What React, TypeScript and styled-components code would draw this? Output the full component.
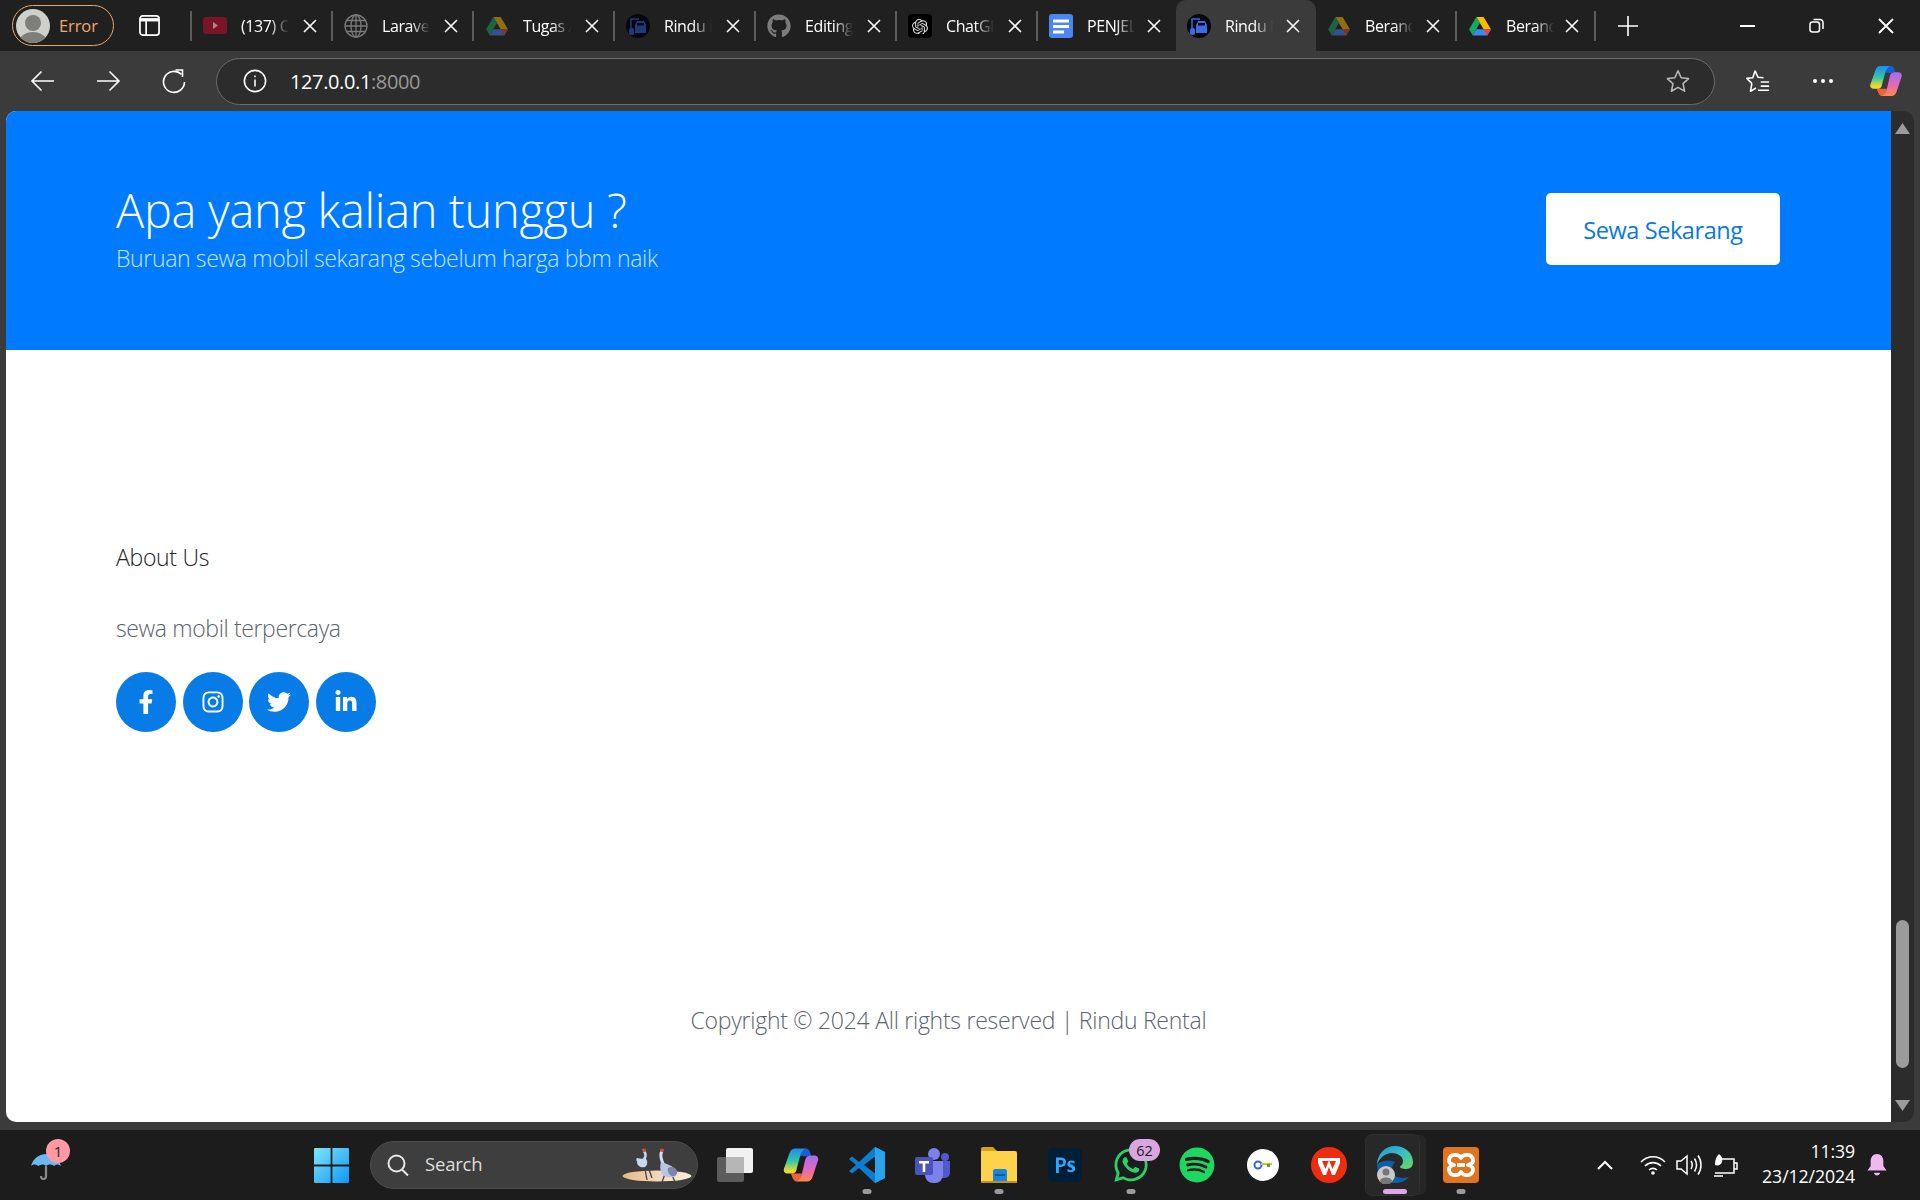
import React from "react";
import styled, { createGlobalStyle } from "styled-components";
import { FaFacebookF, FaInstagram, FaTwitter, FaLinkedinIn, FaGithub, FaSpotify, FaWhatsapp } from "react-icons/fa";
import { SiOpenai } from "react-icons/si";

const Global = createGlobalStyle`
  html, body { margin: 0; padding: 0; background: #1c1c1c; }
  #root { width: 1920px; height: 1200px; overflow: hidden; }
  * { box-sizing: border-box; }
`;

const Shell = styled.div`
  width: 1920px; height: 1200px; display: flex; flex-direction: column;
  font-family: "Open Sans", "Liberation Sans", sans-serif;
`;

/* ---------- tab strip ---------- */
const TabStrip = styled.div`
  height: 51px; background: #202020; display: flex; align-items: center; flex: none;
`;
const ProfileButton = styled.div`
  margin-left: 12px; width: 102px; height: 41px; border: 1.5px solid #eea765; border-radius: 21px;
  display: flex; align-items: center; gap: 9px; padding-left: 3px;
  color: #f0a868; font-size: 16.5px; letter-spacing: -.1px;
`;
const AvatarDisc = styled.div`
  width: 34px; height: 34px; border-radius: 50%; overflow: hidden; flex: none;
`;
const SideIcon = styled.div`
  width: 76px; padding-right: 5px; display: flex; justify-content: center; flex: none; color: #fff;
`;
const Sep = styled.div`
  width: 2px; height: 30px; flex: none; background: #5c5c5c;
`;
const Tab = styled.div<{ $active?: boolean; $w: number; $pr: number }>`
  width: ${p => p.$w}px; height: 51px; flex: none; display: flex; align-items: center;
  padding-left: 11px; padding-right: ${p => p.$pr}px; color: #fff; font-size: 16px; letter-spacing: -.4px;
  background: ${p => (p.$active ? "#3b3b3b" : "transparent")};
  border-radius: ${p => (p.$active ? "10px 10px 0 0" : "0")};
`;
const TabIcon = styled.div`
  width: 24px; height: 24px; flex: none; display: flex; align-items: center; justify-content: center;
`;
const TabTitle = styled.div`
  margin-left: 14px; width: 48px; overflow: hidden; white-space: nowrap; flex: none;
  -webkit-mask-image: linear-gradient(90deg, #000 60%, transparent 100%);
  mask-image: linear-gradient(90deg, #000 60%, transparent 100%);
`;
const TabClose = styled.div`
  margin-left: auto; width: 16px; height: 16px; flex: none; display: flex; color: #fff;
`;
const NewTab = styled.div`
  margin-left: 21px; width: 22px; height: 22px; display: flex; color: #fff; flex: none;
`;
const WindowControls = styled.div`
  margin-left: auto; display: flex; align-items: center; color: #fff;
`;
const WinBtn = styled.div`
  width: 69px; height: 51px; display: flex; align-items: center; justify-content: center;
`;

/* ---------- toolbar ---------- */
const Toolbar = styled.div`
  height: 60px; background: #3b3b3b; display: flex; align-items: center; flex: none; padding-left: 9px; color: #fff;
`;
const NavBtn = styled.div`
  width: 66px; height: 60px; display: flex; align-items: center; justify-content: center; flex: none;
`;
const AddressBar = styled.div`
  margin-left: 9px; width: 1499px; height: 47px; flex: none; border: 1.5px solid #6b6b6b; border-radius: 24px;
  background: #2c2c2c; display: flex; align-items: center; padding: 0 23px 0 26px;
`;
const InfoIcon = styled.div` width: 24px; height: 24px; flex: none; display: flex; `;
const Url = styled.div`
  margin-left: 23px; font-size: 20px; letter-spacing: -.38px; color: #fff; flex: none;
  span { color: #999; }
`;
const StarBtn = styled.div` margin-left: auto; width: 26px; height: 26px; display: flex; color: #b8b8b8; `;
const FavBtn = styled.div` margin-left: 29px; width: 26px; display: flex; `;
const MoreDots = styled.div`
  margin-left: 43px; display: flex; gap: 4px; flex: none;
  i { width: 4px; height: 4px; border-radius: 50%; background: #fff; display: block; }
`;
const CopilotBtn = styled.div` margin-left: 36px; width: 34px; height: 32px; display: flex; `;

/* ---------- viewport ---------- */
const ViewportFrame = styled.div`
  flex: 1; min-height: 0; background: #3b3b3b; padding: 0 6px 8px; display: flex;
`;
const Page = styled.main`
  width: 1885px; background: #fff; border-radius: 10px 0 0 10px; overflow: hidden; display: flex; flex-direction: column;
  font-family: "Open Sans", "Liberation Sans", sans-serif; font-weight: 300;
`;
const Banner = styled.section`
  height: 239px; flex: none; background: #007bff; display: flex; align-items: center; justify-content: space-between;
  padding: 0 111px 3px 110px; color: #fff;
`;
const BannerText = styled.div` display: flex; flex-direction: column; margin-bottom: 2px; `;
const BannerTitle = styled.h1`
  margin: 0; font-size: 47px; line-height: 58px; font-weight: 300; letter-spacing: -.3px;
`;
const BannerSub = styled.p`
  margin: 1px 0 0; font-size: 23px; line-height: 36px; color: #c9e2ff; letter-spacing: -.35px;
`;
const CtaButton = styled.a`
  width: 234px; height: 72px; background: #fff; border-radius: 5px; color: #0a78e8; display: flex; align-items: center;
  justify-content: center; padding-top: 1px; font-size: 23.5px; font-weight: 400; letter-spacing: -.42px;
`;
const FooterBody = styled.section`
  padding: 193px 110px 0; display: flex; flex-direction: column;
`;
const AboutTitle = styled.h4`
  margin: 0; font-size: 23px; line-height: 29px; font-weight: 300; color: #212529; letter-spacing: -.3px;
`;
const AboutText = styled.p`
  margin: 38px 0 0; font-size: 23px; line-height: 36px; color: #5a6470; letter-spacing: -.37px;
`;
const SocialRow = styled.div` margin-top: 26px; display: flex; gap: 6.67px; `;
const SocialLink = styled.a`
  width: 60px; height: 60px; border-radius: 50%; background: #077be6; color: #fff; display: flex; align-items: center;
  justify-content: center; font-size: 24px;
`;
const Copyright = styled.p`
  margin: 270px 0 0; text-align: center; font-size: 23px; line-height: 36px; color: #5a6470; letter-spacing: -.26px;
`;

const ScrollTrack = styled.div`
  width: 23px; background: #2c2c2c; border-radius: 0 10px 10px 0; display: flex; flex-direction: column; align-items: center;
  padding: 12px 0 11px;
`;
const ScrollThumb = styled.div`
  margin-top: auto; margin-bottom: 32px; width: 13px; height: 148px; border-radius: 7px; background: #9b9b9b;
`;
const ScrollArrow = styled.svg` width: 15px; height: 11px; flex: none; `;

/* ---------- taskbar ---------- */
const Taskbar = styled.footer`
  height: 70px; flex: none; background: #1c1c1c; display: flex; align-items: center; color: #fff;
`;
const Weather = styled.div`
  width: 314px; flex: none; height: 70px; display: flex; align-items: center; padding: 4px 0 0 31px; position: relative;
`;
const WeatherBadge = styled.div`
  position: absolute; left: 46px; top: 9px; width: 24px; height: 24px; border-radius: 50%; background: #ff9aa5; color: #222;
  display: flex; align-items: center; justify-content: center; font-size: 15px;
`;
const StartIcon = styled.div` width: 35px; height: 35px; flex: none; display: flex; `;
const SearchBox = styled.div`
  margin-left: 21px; width: 328px; height: 48px; flex: none; border-radius: 24px; background: #3e3e3e; border: 1.5px solid #4c4c4c;
  display: flex; align-items: center; padding: 0 5px 0 16px; color: #ddd; font-size: 18.5px; letter-spacing: -.2px;
`;
const SearchLabel = styled.span` position: relative; top: -2px; `;
const SearchGlyph = styled.div` width: 22px; height: 22px; display: flex; margin-right: 16px; flex: none; `;
const Birds = styled.div` margin-left: auto; width: 70px; height: 42px; display: flex; flex: none; `;
const Apps = styled.div` margin-left: 4px; display: flex; flex: none; `;
const AppSlot = styled.div<{ $active?: boolean }>`
  width: 66px; height: 70px; display: flex; align-items: center; justify-content: center; position: relative;
  &::before {
    content: ${p => (p.$active ? '""' : "none")}; position: absolute; left: 3px; top: 4px; width: 53px; height: 60px;
    border-radius: 7px; background: #282828; border: 1.5px solid #303030; box-shadow: 7px 0 0 -1px #262626;
  }
  & > svg { position: relative; }
`;
const AppDot = styled.div<{ $active?: boolean }>`
  position: absolute; bottom: 6px; left: 50%; transform: translateX(-50%); height: 5px; border-radius: 3px;
  width: ${p => (p.$active ? 24 : 9)}px; background: ${p => (p.$active ? "#e0a6e6" : "#9a9a9a")};
`;
const CountBadge = styled.div`
  position: absolute; left: 31px; top: 9px; width: 31px; height: 22px; border-radius: 11px; background: #d9a6e0; color: #1c1c1c;
  display: flex; align-items: center; justify-content: center; font-size: 14.5px;
`;
const Tray = styled.div`
  flex: 1; display: flex; align-items: center; padding-right: 33px; padding-left: 101px;
`;
const TrayIcon = styled.div<{ $gap?: number }>`
  width: 26px; height: 26px; display: flex; flex: none; margin-left: ${p => p.$gap ?? 10}px;
`;
const Clock = styled.div`
  margin-left: auto; margin-top: -3px; text-align: right; font-size: 17.7px; line-height: 24.5px; letter-spacing: -.1px; color: #fff; flex: none;
`;
const BellIcon = styled.div` margin-left: 12px; width: 20px; height: 24px; display: flex; flex: none; `;

/* ---------- icons ---------- */
const X = () => (
  <svg width="16" height="16" viewBox="0 0 16 16"><path d="M2 2l12 12M14 2L2 14" stroke="currentColor" strokeWidth="1.6" /></svg>
);
const Drive = ({ dim }: { dim?: boolean }) => (
  <svg width="22" height="20" viewBox="0 0 24 22" opacity={dim ? 0.5 : 1}>
    <path d="M8 1h8l8 13.500h-8z" fill="#ffba00" />
    <path d="M8 1L0 14.500l4 7 8-14z" fill="#16a765" />
    <path d="M4 21.500h16l4-7H8z" fill="#4285f4" />
    <path d="M20 21.500l4-7h-8z" fill="#ea4335" />
  </svg>
);
const CarLogo = ({ dim }: { dim?: boolean }) => (
  <svg width="24" height="24" viewBox="0 0 24 24">
    <circle cx="12" cy="12" r="12" fill="#05070f" />
    <g opacity={dim ? 0.5 : 1}>
      <rect x="3" y="14" width="5" height="7" rx="2" fill="#3a6be0" />
      <path d="M5 15V5h8" stroke="#3a6be0" strokeWidth="1.500" fill="none" />
      <path d="M9 11l2-4h7l2 4v8H9z" fill="#3a6be0" />
      <rect x="11" y="9" width="7" height="2.500" fill="#05070f" />
    </g>
  </svg>
);
const Avatar = () => (
  <svg width="34" height="34" viewBox="0 0 34 34">
    <rect width="34" height="34" fill="#cfcfcb" />
    <circle cx="17" cy="14" r="8" fill="#7e7e7a" />
    <ellipse cx="17" cy="33" rx="14" ry="10" fill="#7e7e7a" />
  </svg>
);

function TabIconBlack() {
  return (
    <svg width="24" height="24" viewBox="0 0 24 24">
      <rect width="24" height="24" rx="4" fill="#000" />
      <foreignObject x="4" y="4" width="16" height="16"><SiOpenai size={16} color="#ddd" /></foreignObject>
    </svg>
  );
}

const tabs: { title: string; icon: React.ReactNode; w: number; pr: number; sep: boolean }[] = [
  { title: "(137) Coding", w: 139, pr: 13, sep: true, icon: <svg width="24" height="17" viewBox="0 0 24 17"><rect width="24" height="17" rx="3" fill="#7a1428" /><path d="M10 5l5 3.500-5 3.500z" fill="#b9808c" /></svg> },
  { title: "Laravel", w: 139, pr: 13, sep: true, icon: <svg width="24" height="24" viewBox="0 0 24 24" fill="none" stroke="#7a7a7a" strokeWidth="1.300"><circle cx="12" cy="12" r="11" /><ellipse cx="12" cy="12" rx="5" ry="11" /><path d="M12 1v22M1 12h22M2.500 6.500h19M2.500 17.500h19" /></svg> },
  { title: "Tugas Akhir", w: 139, pr: 13, sep: true, icon: <Drive dim /> },
  { title: "Rindu Rental", w: 139, pr: 13, sep: true, icon: <CarLogo dim /> },
  { title: "Editing", w: 139, pr: 13, sep: true, icon: <FaGithub size={24} color="#7c7c7c" /> },
  { title: "ChatGPT", w: 139, pr: 13, sep: true, icon: <TabIconBlack /> },
  { title: "PENJELASAN", w: 138, pr: 14, sep: true, icon: <svg width="24" height="24" viewBox="0 0 24 24"><rect width="24" height="24" rx="3" fill="#4a87f0" /><path d="M4 5.500h16v3H4zM4 11h16v3H4zM4 16.500h11v3H4z" fill="#fff" /></svg> },
  { title: "Rindu Rental", w: 140, pr: 15, sep: false, icon: <CarLogo /> },
  { title: "Beranda", w: 139, pr: 14, sep: false, icon: <Drive dim /> },
  { title: "Beranda", w: 137, pr: 14, sep: true, icon: <Drive /> },
];

const CopilotLogo = ({ w = 36, h = 36, id }: { w?: number; h?: number; id: string }) => (
  <svg width={w} height={h} viewBox="0 0 36 35">
    <defs>
      <linearGradient id={`${id}a`} x1="0" y1="0" x2="0" y2="1"><stop offset="0" stopColor="#1f8af0" /><stop offset=".5" stopColor="#2fc9a8" /><stop offset=".9" stopColor="#f4d72c" /></linearGradient>
      <linearGradient id={`${id}b`} x1="0" y1="0" x2="0" y2="1"><stop offset="0" stopColor="#a070f0" /><stop offset=".55" stopColor="#e868b8" /><stop offset="1" stopColor="#fb8a4c" /></linearGradient>
    </defs>
    <path d="M23 1c3 0 4 3 5 7l-6 1c-2-1-4-1-5 0 1-4 3-8 6-8z" fill="#1560d8" />
    <path d="M10 26h9c-1 4-3 8-6 8-3-1-4-5-5-8z" fill="#f2603a" />
    <path d="M12 1h11c-3 1-5 4-6 8l-3 11c-1 6-3 6-6 6H5c-3 0-5-2-4-5L6 7c1-4 3-6 6-6z" fill={`url(#${id}a)`} />
    <path d="M24 34H13c3-1 5-4 6-8l3-13c1-4 3-5 6-5h3c3 0 5 2 4 5l-5 15c-1 4-3 6-6 6z" fill={`url(#${id}b)`} />
  </svg>
);

const WinLogo = () => (
  <svg width="35" height="35" viewBox="0 0 35 35">
    <defs><linearGradient id="win" x1="0" y1="0" x2="1" y2="1"><stop offset="0" stopColor="#7ee6fb" /><stop offset="1" stopColor="#0f96f5" /></linearGradient></defs>
    <path d="M0 1a1 1 0 011-1h15.600v16.600H0zM18.400 0H34a1 1 0 011 1v15.600H18.400zM0 18.400h16.600V35H1a1 1 0 01-1-1zM18.400 18.400H35V34a1 1 0 01-1 1H18.400z" fill="url(#win)" />
  </svg>
);

const BirdsArt = () => (
  <svg width="70" height="42" viewBox="0 0 70 42">
    <defs>
      <linearGradient id="sand" x1="0" y1="0" x2="1" y2="0"><stop offset="0" stopColor="#e8b888" /><stop offset=".6" stopColor="#f4dcc0" /><stop offset="1" stopColor="#f6ecdc" /></linearGradient>
    </defs>
    <ellipse cx="35" cy="32" rx="34.500" ry="5.500" fill="url(#sand)" />
    <path d="M22 20l3 16M25 20l5 14M43 30l-3 8M50 31l3 7" stroke="#3c4252" strokeWidth="1.300" fill="none" />
    <path d="M22 7c2 3 2 6 0 8" stroke="#cdd8ee" strokeWidth="2.500" fill="none" />
    <path d="M15 14c3 1 6 1 8 0 3 2 3 7 0 9-4 1-8-1-8-5 1 0-2-2 0-4z" fill="#c8d8f2" />
    <path d="M40 7c-3 5 0 9 1 13" stroke="#d4def0" strokeWidth="3" fill="none" />
    <path d="M39 18c4 1 10 3 14 7 3 3 2 7-1 8-5 1-11 0-13-5-1-3-1-7 0-10z" fill="#b8c6e4" />
    <path d="M46 24c3-2 8-1 9 3 1 3-2 6-5 5-3-1-5-5-4-8z" fill="#7c86a8" />
    <circle cx="22" cy="6" r="2" fill="#c8503c" />
    <circle cx="40" cy="6" r="2" fill="#c8503c" />
    <path d="M22 5l2-5M40 5l-1-5M41 5l2-4" stroke="#4a3a3a" strokeWidth="1.200" />
  </svg>
);

function PsIcon() {
  return (
    <svg width="34" height="34" viewBox="0 0 34 34">
      <rect width="34" height="34" rx="5" fill="#001e36" />
      <path d="M8 25V9.500h5c3 0 5 1.700 5 4.600s-2 4.800-5 4.800h-2.200V25zm2.800-8.500H13c1.400 0 2.300-.9 2.300-2.300S14.400 12 13 12h-2.200z" fill="#31a8ff" />
      <path d="M26.500 15.500c-1-.6-2-.9-3-.9-.9 0-1.300.3-1.300.8 0 1.500 5 1.200 5 5 0 2.500-2 3.800-4.300 3.800-1.300 0-2.500-.3-3.400-.8v-2.400c1 .7 2.100 1 3.200 1 1 0 1.600-.4 1.600-1 0-1.600-5-1.200-5-4.900 0-2.300 1.900-3.700 4.200-3.700 1.100 0 2.100.2 3 .6z" fill="#31a8ff" />
    </svg>
  );
}

function EdgeIcon() {
  return (
    <svg width="36" height="38" viewBox="0 0 36 38">
      <defs>
        <linearGradient id="eg" x1="0" y1="0" x2="1" y2="1"><stop offset="0" stopColor="#1f8fe0" /><stop offset=".5" stopColor="#35c1c1" /><stop offset="1" stopColor="#6ed85c" /></linearGradient>
      </defs>
      <path d="M18 0c10 0 18 7 18 16 0 4-2 7-7 7-3 0-6-1-6-2 0-1 3-2 3-6 0-5-6-8-11-8C8 7 2 12 0 19 0 8 8 0 18 0z" fill="url(#eg)" />
      <path d="M0 19c0 10 8 18 18 18 6 0 10-2 14-6-3 1-11 2-15-2-3-3-3-8 1-13-7-3-17 0-18 3z" fill="#0f5fa8" />
      <circle cx="9" cy="29" r="9" fill="#c9c9c9" />
      <circle cx="9" cy="26" r="3.500" fill="#777" />
      <ellipse cx="9" cy="35" rx="6" ry="3.500" fill="#777" />
    </svg>
  );
}

const appIcons: { key: string; node: React.ReactNode; dot?: boolean; active?: boolean; badge?: string }[] = [
  { key: "task", node: <svg width="36" height="36" viewBox="0 0 36 36"><rect x="0" y="10" width="27" height="25" rx="2" fill="#5c5c5c" /><rect x="9" y="1" width="27" height="25" rx="2" fill="#f1f1f1" /><rect x="9" y="10" width="18" height="16" fill="#b6b6b6" /></svg> },
  { key: "copilot", node: <CopilotLogo id="tb" /> },
  { key: "code", dot: true, node: <svg width="36" height="36" viewBox="0 0 36 36"><path d="M26 0l10 5v26l-10 5-16-15-7 5.500L0 24l7-6-7-6 3-2.500 7 5.500z" fill="#0a7fd0" /><path d="M26 0l10 5v26l-10 5z" fill="#2aa3ef" /><path d="M26 9.500L15 18l11 8.500z" fill="#1c1c1c" /></svg> },
  { key: "teams", node: <svg width="36" height="36" viewBox="0 0 36 36"><circle cx="19" cy="7" r="6" fill="#7b83eb" /><circle cx="30" cy="10" r="4" fill="#5059c9" /><path d="M24 14h11v12a5 5 0 01-5 5h-6z" fill="#5059c9" /><path d="M10 14h18v14a8 8 0 01-8 8h-2a8 8 0 01-8-8z" fill="#7b83eb" /><rect x="0" y="10" width="18" height="18" rx="2" fill="#4b53bc" /><path d="M4 14h10v2.500h-3.700V25H7.700v-8.500H4z" fill="#fff" /></svg> },
  { key: "files", dot: true, node: <svg width="36" height="36" viewBox="0 0 36 36"><path d="M0 2a2 2 0 012-2h10l4 4H0z" fill="#d8a012" /><path d="M0 4h34a2 2 0 012 2v28H0z" fill="#ffd24c" /><path d="M12 24a2 2 0 012-2h10a2 2 0 012 2v10H12z" fill="#1a86d8" /><rect x="14" y="27" width="10" height="2" fill="#0b5ea8" /><rect y="34" width="36" height="2" fill="#c98f10" /></svg> },
  { key: "ps", node: <PsIcon /> },
  { key: "wa", dot: true, badge: "62", node: <FaWhatsapp size={38} color="#25d366" /> },
  { key: "spotify", node: <FaSpotify size={36} color="#1ed760" /> },
  { key: "key", node: <svg width="32" height="32" viewBox="0 0 32 32"><circle cx="16" cy="16" r="16" fill="#fff" /><circle cx="11" cy="16" r="3.500" fill="none" stroke="#2a6be4" strokeWidth="2" /><path d="M14 14h11v2h-3v2h-2v-2h-6z" fill="#f2b90f" /><rect x="20" y="15" width="3" height="3" fill="#2fa84f" /></svg> },
  { key: "wps", node: <svg width="36" height="36" viewBox="0 0 36 36"><circle cx="18" cy="18" r="18" fill="#ee2c10" /><path d="M7 11h22v5l-5 12h-3l-3-8-3 8h-3L7 16z" fill="#fff" /><path d="M11 14l3.500 8 3.500-9 3.500 9 3.500-8z" fill="#ee2c10" /></svg> },
  { key: "edge", dot: true, active: true, node: <EdgeIcon /> },
  { key: "xampp", dot: true, node: <svg width="36" height="36" viewBox="0 0 36 36"><rect width="36" height="36" rx="4" fill="#e0741f" /><path d="M18 11c-2-4-11-5-12 2-.5 3 3 4.500 5 5-2 .5-5.500 2-5 5 1 7 10 6 12 2 2 4 11 5 12-2 .5-3-3-4.500-5-5 2-.5 5.500-2 5-5-1-7-10-6-12-2z" fill="none" stroke="#fff" strokeWidth="3.800" strokeLinejoin="round" /><path d="M14 18h8" stroke="#fff" strokeWidth="3.800" /></svg> },
];

export default function App() {
  return (
    <Shell>
      <Global />
      <TabStrip>
        <ProfileButton>
          <AvatarDisc><Avatar /></AvatarDisc>
          Error
        </ProfileButton>
        <SideIcon>
          <svg width="21" height="21" viewBox="0 0 22 22" fill="none" stroke="currentColor" strokeWidth="1.800">
            <rect x="1" y="1" width="20" height="20" rx="3" />
            <path d="M1 5h20" strokeWidth="3.500" />
            <path d="M7.500 5v16" />
          </svg>
        </SideIcon>
        {tabs.map((t, i) => (
          <React.Fragment key={i}>
            {t.sep && <Sep />}
            <Tab $active={i === 7} $w={t.w} $pr={t.pr}>
              <TabIcon>{t.icon}</TabIcon>
              <TabTitle>{t.title}</TabTitle>
              <TabClose><X /></TabClose>
            </Tab>
          </React.Fragment>
        ))}
        <Sep />
        <NewTab>
          <svg width="22" height="22" viewBox="0 0 22 22"><path d="M11 1v20M1 11h20" stroke="currentColor" strokeWidth="1.600" /></svg>
        </NewTab>
        <WindowControls>
          <WinBtn><svg width="15" height="4" viewBox="0 0 15 4"><rect y="1" width="15" height="2" fill="currentColor" /></svg></WinBtn>
          <WinBtn><svg width="15" height="15" viewBox="0 0 15 15" fill="none" stroke="currentColor" strokeWidth="1.500"><rect x="1" y="4" width="9.500" height="10" rx="2.500" /><path d="M4.500 1.500H11a3 3 0 013 3V11" /></svg></WinBtn>
          <WinBtn><svg width="16" height="16" viewBox="0 0 16 16"><path d="M1 1l14 14M15 1L1 15" stroke="currentColor" strokeWidth="1.800" /></svg></WinBtn>
        </WindowControls>
      </TabStrip>

      <Toolbar>
        <NavBtn><svg width="25" height="22" viewBox="0 0 25 22" fill="none" stroke="currentColor" strokeWidth="1.600"><path d="M24 11H2M11.500 1.500L2 11l9.500 9.500" /></svg></NavBtn>
        <NavBtn><svg width="25" height="22" viewBox="0 0 25 22" fill="none" stroke="currentColor" strokeWidth="1.600"><path d="M1 11h22M13.500 1.500L23 11l-9.500 9.500" /></svg></NavBtn>
        <NavBtn><svg width="26" height="26" viewBox="0 0 26 26" fill="none" stroke="currentColor" strokeWidth="1.600"><path d="M20.500 6.500a10.500 10.500 0 103 7.500" /><path d="M14.500 2h7v7" /></svg></NavBtn>
        <AddressBar>
          <InfoIcon>
            <svg width="24" height="24" viewBox="0 0 26 26" fill="none" stroke="#fff" strokeWidth="1.700"><circle cx="13" cy="13" r="11.500" /><path d="M13 11.500v7.500" /><path d="M13 7v2" /></svg>
          </InfoIcon>
          <Url>127.0.0.1<span>:8000</span></Url>
          <StarBtn>
            <svg width="26" height="26" viewBox="0 0 28 28" fill="none" stroke="currentColor" strokeWidth="1.700" strokeLinejoin="round"><path d="M14 3l3.400 7.500 8 .9-6 5.500 1.700 8L14 20.800 6.900 25l1.700-8-6-5.600 8-.9z" /></svg>
          </StarBtn>
        </AddressBar>
        <FavBtn>
          <svg width="26" height="26" viewBox="0 0 28 28" fill="none" stroke="#fff" strokeWidth="1.700" strokeLinejoin="round"><path d="M12 3l3 7 6 .5M8.500 16.500L3 11.200l6.500-.7L12 3M8.500 16.500L7 25l6-3.500" /><path d="M18 15h9M18 19.500h9M15 24h12" /></svg>
        </FavBtn>
        <MoreDots><i /><i /><i /></MoreDots>
        <CopilotBtn><CopilotLogo id="tl" w={34} h={32} /></CopilotBtn>
      </Toolbar>

      <ViewportFrame>
        <Page>
          <Banner>
            <BannerText>
              <BannerTitle>Apa yang kalian tunggu ?</BannerTitle>
              <BannerSub>Buruan sewa mobil sekarang sebelum harga bbm naik</BannerSub>
            </BannerText>
            <CtaButton>Sewa Sekarang</CtaButton>
          </Banner>
          <FooterBody>
            <AboutTitle>About Us</AboutTitle>
            <AboutText>sewa mobil terpercaya</AboutText>
            <SocialRow>
              <SocialLink><FaFacebookF /></SocialLink>
              <SocialLink><FaInstagram /></SocialLink>
              <SocialLink><FaTwitter /></SocialLink>
              <SocialLink><FaLinkedinIn /></SocialLink>
            </SocialRow>
            <Copyright>Copyright © 2024 All rights reserved | Rindu Rental</Copyright>
          </FooterBody>
        </Page>
        <ScrollTrack>
          <ScrollArrow viewBox="0 0 15 11"><path d="M7.500 0L15 11H0z" fill="#9b9b9b" /></ScrollArrow>
          <ScrollThumb />
          <ScrollArrow viewBox="0 0 15 11"><path d="M0 0h15L7.500 11z" fill="#9b9b9b" /></ScrollArrow>
        </ScrollTrack>
      </ViewportFrame>

      <Taskbar>
        <Weather>
          <svg width="30" height="28" viewBox="0 0 30 28">
            <path d="M0 13C2 5 9 1 15 1s13 4 15 12c-3-2-5-2-7 0-2-2-6-2-8 0-2-2-5-2-8 0-2-2-5-2-7 0z" fill="#6cb8f0" />
            <path d="M15 13v10c0 4-5 4-5 0" fill="none" stroke="#8a8a8a" strokeWidth="2.200" />
          </svg>
          <WeatherBadge>1</WeatherBadge>
        </Weather>
        <StartIcon><WinLogo /></StartIcon>
        <SearchBox>
          <SearchGlyph>
            <svg width="22" height="22" viewBox="0 0 22 22" fill="none" stroke="#e8e8e8" strokeWidth="2"><circle cx="9.500" cy="9.500" r="8" /><path d="M15 15.500l6 6" /></svg>
          </SearchGlyph>
          <SearchLabel>Search</SearchLabel>
          <Birds><BirdsArt /></Birds>
        </SearchBox>
        <Apps>
          {appIcons.map(a => (
            <AppSlot key={a.key} $active={a.active}>
              {a.node}
              {a.badge && <CountBadge>{a.badge}</CountBadge>}
              {a.dot && <AppDot $active={a.active} />}
            </AppSlot>
          ))}
        </Apps>
        <Tray>
          <TrayIcon $gap={0}>
            <svg width="20" height="26" viewBox="0 0 20 26" fill="none" stroke="#fff" strokeWidth="2"><path d="M3 17l7-7 7 7" /></svg>
          </TrayIcon>
          <TrayIcon $gap={19}>
            <svg width="26" height="26" viewBox="0 0 26 26" fill="none" stroke="#fff" strokeWidth="1.600"><path d="M1 10c7-7 17-7 24 0M5 14c4.500-4.500 11.500-4.500 16 0M9 18c2.200-2.200 5.800-2.200 8 0" /><circle cx="13" cy="21" r="1.800" fill="#fff" stroke="none" /></svg>
          </TrayIcon>
          <TrayIcon>
            <svg width="26" height="26" viewBox="0 0 26 26" fill="none" stroke="#fff" strokeWidth="1.500"><path d="M1 9h4l6-5v18l-6-5H1z" /><path d="M15 9c1.500 2.500 1.500 5.500 0 8M18.500 6.500c2.500 4 2.500 9 0 13M22 3.500c4 5.500 4 13.500 0 19" /></svg>
          </TrayIcon>
          <TrayIcon>
            <svg width="26" height="26" viewBox="0 0 26 26" fill="none" stroke="#fff" strokeWidth="1.500"><path d="M10 7h12v14H3" /><path d="M22 11h3v6h-3" /><path d="M7 2c3 2 4 5 3 8s-4 4-7 3c0-5 1-8 4-11z" fill="#fff" stroke="none" /><path d="M2 24h9" /></svg>
          </TrayIcon>
          <Clock>11:39<br />23/12/2024</Clock>
          <BellIcon>
            <svg width="20" height="24" viewBox="0 0 22 26"><path d="M11 1c-4.500 0-7 3.500-7 8v5l-3.500 5h21L18 14V9c0-4.500-2.500-8-7-8z" fill="#efb8ee" /><path d="M7.500 21.500h7c-.5 2-2 3-3.500 3s-3-1-3.500-3z" fill="#efb8ee" /></svg>
          </BellIcon>
        </Tray>
      </Taskbar>
    </Shell>
  );
}
